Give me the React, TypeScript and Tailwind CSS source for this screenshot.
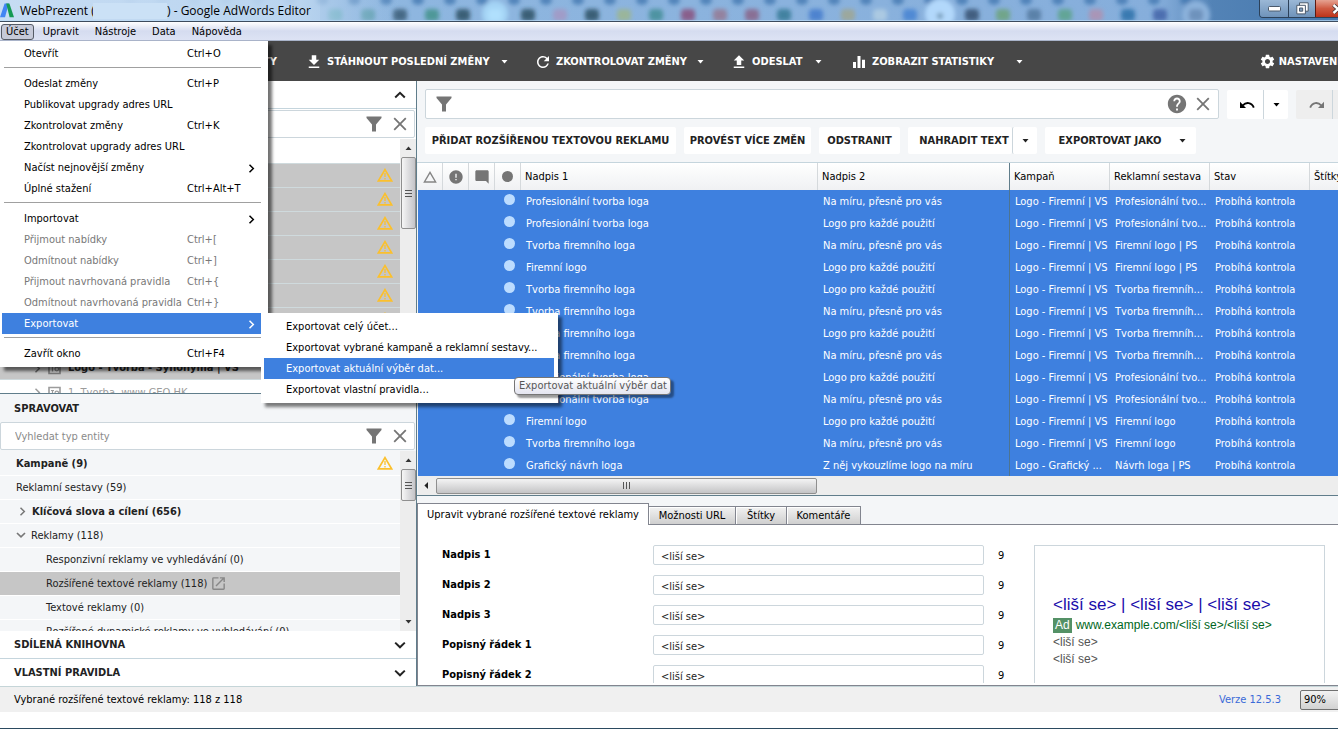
import React from "react";
import {
  MdFileDownload,
  MdRefresh,
  MdFileUpload,
  MdEqualizer,
  MdSettings,
  MdHelp,
  MdError,
  MdModeComment,
  MdLaunch,
} from "react-icons/md";

/* ---------- small icons ---------- */

function Caret({ className = "" }: { className?: string }) {
  return (
    <svg className={className} width="7" height="4" viewBox="0 0 7 4" aria-hidden="true">
      <path d="M0.5 0h6L3.5 3.6z" fill="currentColor" />
    </svg>
  );
}

function Funnel() {
  return (
    <svg width="16" height="16" viewBox="0 0 16 16" aria-hidden="true">
      <path d="M0.5 0.5h15v1.6L10 8.6V15.5H6V8.6L0.5 2.1z" fill="#757575" />
    </svg>
  );
}

function Cross() {
  return (
    <svg width="14" height="14" viewBox="0 0 14 14" aria-hidden="true">
      <path d="M1.2 1.2l11.6 11.6M12.8 1.2L1.2 12.8" stroke="#757575" strokeWidth="1.8" fill="none" />
    </svg>
  );
}

function Chevron({ dir, size = 12 }: { dir: "up" | "down"; size?: number }) {
  return (
    <svg width={size} height={size} viewBox="0 0 12 12" aria-hidden="true">
      <path
        d={dir === "up" ? "M1.2 8.5L6 3.8l4.8 4.7" : "M1.2 3.6L6 8.3l4.8-4.7"}
        stroke="currentColor"
        strokeWidth="2"
        fill="none"
      />
    </svg>
  );
}

function ChevronRight() {
  return (
    <svg width="7" height="9" viewBox="0 0 7 9" aria-hidden="true">
      <path d="M1.5 0.8l3.800 3.700-3.800 3.700" stroke="currentColor" strokeWidth="1.5" fill="none" />
    </svg>
  );
}

function Warning() {
  return (
    <svg width="16" height="14" viewBox="0 0 16 14" aria-hidden="true">
      <path d="M8 1.6L14.6 12.9H1.4z" fill="none" stroke="#fbc02d" strokeWidth="1.7" />
      <path d="M8 5v4M8 10v1.600" stroke="#fbc02d" strokeWidth="1.3" />
    </svg>
  );
}

function CampaignIcon() {
  return (
    <svg width="13" height="13" viewBox="0 0 13 13" aria-hidden="true">
      <path d="M1 1.5h11v10H1z" fill="none" stroke="currentColor" strokeWidth="1.6" />
      <path d="M3 4.5h3M4.5 4.5v5" stroke="currentColor" strokeWidth="1.2" />
      <circle cx="8.8" cy="7" r="1.8" fill="none" stroke="currentColor" strokeWidth="1.2" />
    </svg>
  );
}

function CurvedArrow({ flip = false }: { flip?: boolean }) {
  return (
    <svg width="15" height="8" viewBox="0 0 15 8" aria-hidden="true">
      <g transform={flip ? "translate(15 0) scale(-1 1)" : undefined}>
        <path d="M0 0.8v6.2h6z" fill="currentColor" />
        <path d="M2.8 4.3C6 1 11.5 1 13.8 6.6" stroke="currentColor" strokeWidth="1.9" fill="none" />
      </g>
    </svg>
  );
}

/* ---------- title bar ---------- */

const tabBlobs: [number, string][] = [
  [335, "#4aa3a8"], [368, "#4f97a0"], [400, "#34566f"], [432, "#3f9087"],
  [463, "#254a5c"], [495, "#b3e2ff"], [528, "#254a5c"], [560, "#a596c2"],
  [592, "#254a5c"], [624, "#9db58b"], [656, "#3d8c92"], [688, "#8a4a78"],
  [720, "#96758f"], [752, "#8a5f82"], [784, "#2f7591"], [816, "#3d78cc"],
  [848, "#a0a58d"], [880, "#b4cfe4"], [910, "#4280d2"], [972, "#2e4b69"],
  [1003, "#6aa375"], [1034, "#50759c"], [1065, "#59a286"], [1096, "#b18fae"],
  [1128, "#286da6"], [1160, "#405fa5"], [1196, "#6689b4"],
];

function TitleBar() {
  return (
    <header className="relative flex h-[22px] shrink-0 items-center overflow-hidden border-b border-[#3d4c5e] bg-linear-to-r from-[#b9d5f0] via-[#8ab2dd] to-[#4678ad]">
      <svg className="absolute inset-0 h-full w-full" aria-hidden="true">
        <defs>
          <filter id="soft" x="-50%" y="-50%" width="200%" height="200%">
            <feGaussianBlur stdDeviation="2" />
          </filter>
          <linearGradient id="glow">
            <stop offset="0" stopColor="#c6dcf3" />
            <stop offset="0.75" stopColor="#bcd6f0" stopOpacity="0.9" />
            <stop offset="1" stopColor="#a8c8e8" stopOpacity="0" />
          </linearGradient>
          <linearGradient id="sky">
            <stop offset="0" stopColor="#8fb7e0" />
            <stop offset="0.94" stopColor="#86aedb" />
            <stop offset="1" stopColor="#86aedb" stopOpacity="0" />
          </linearGradient>
        </defs>
        <rect x="320" width="892" height="22" fill="url(#sky)" />
        <g filter="url(#soft)">
          {Array.from({ length: 34 }, (_, i) => (
            <ellipse key={i} cx={130 + i * 32} cy="0" rx="6" ry="5" fill="#3f74ad" opacity="0.75" />
          ))}
          <circle cx="940" cy="14" r="15" fill="#b2d8fb" />
          <circle cx="940" cy="16" r="3" fill="#7195b4" />
          <circle cx="495" cy="14" r="13" fill="#a4d4f5" />
          <circle cx="1196" cy="15" r="14" fill="#8cb2dc" />
          {tabBlobs.map(([x, c]) => (
            <rect key={x} x={x - 7} y="9" width="14" height="12" rx="4" fill={c} opacity="0.8" />
          ))}
        </g>
        <rect width="400" height="22" fill="url(#glow)" />
        <rect y="20" width="100%" height="1" fill="#bcdcf5" opacity="0.7" />
      </svg>
      <svg className="relative shrink-0" width="14" height="15" viewBox="0 0 14 15" aria-hidden="true">
        <path d="M4.6 0.6h4.2L5 14.2H0z" fill="#4285f4" />
        <path d="M6.2 0.6h3.2L14 14.2H9.6z" fill="#159a53" />
      </svg>
      <h1 className="relative flex h-full items-center pl-1.5 font-['Open_Sans','Noto_Sans',sans-serif] text-xs text-black">
        <span className="w-[73px] whitespace-nowrap">WebPrezent (</span>
        <span className="h-4 w-[74px] bg-[#cbe1f6]" />
        <span className="whitespace-nowrap">) - Google AdWords Editor</span>
      </h1>
      <div className="relative -mr-[18px] ml-auto flex h-[18px] shrink-0 self-start overflow-hidden rounded-b border border-t-0 border-[#2c4159] text-white">
        <button type="button" aria-label="Minimalizovat" className="flex w-7 items-center justify-center bg-linear-to-b from-[#9bb8d6] to-[#6f93ba]">
          <svg width="13" height="6" viewBox="0 0 13 6"><rect x="0.5" y="0.5" width="12" height="4.5" rx="1" fill="#fff" stroke="#4b5a6c" /></svg>
        </button>
        <button type="button" aria-label="Obnovit" className="flex w-[27px] items-center justify-center border-l border-[#2c4159] bg-linear-to-b from-[#9bb8d6] to-[#6f93ba]">
          <svg width="13" height="13" viewBox="0 0 13 13">
            <path d="M3.5 0.8h8.7v8.400H3.500z" fill="#fff" stroke="#4b5a6c" />
            <path d="M0.8 3.300h8.600v8.600H0.800z" fill="#fff" stroke="#4b5a6c" />
            <path d="M3.500 6h3.200v3.200H3.500z" fill="#7f9dbd" stroke="#4b5a6c" />
          </svg>
        </button>
        <button type="button" aria-label="Zavřít" className="flex w-[40px] items-center justify-center border-l border-[#5d1a12] bg-linear-to-b from-[#e5a292] via-[#cf5a42] to-[#bc3219] pl-1">
          <svg width="12" height="10" viewBox="0 0 12 10"><path d="M1.500 1l9 8M10.500 1l-9 8" stroke="#4b3a3c" strokeWidth="4" /><path d="M1.500 1l9 8M10.500 1l-9 8" stroke="#fff" strokeWidth="2.400" /></svg>
        </button>
      </div>
    </header>
  );
}

/* ---------- menus ---------- */

type Entry = { label: string; keys?: string; sub?: boolean; off?: boolean; on?: boolean } | null;

const accountMenu: Entry[] = [
  { label: "Otevřít", keys: "Ctrl+O" },
  null,
  { label: "Odeslat změny", keys: "Ctrl+P" },
  { label: "Publikovat upgrady adres URL" },
  { label: "Zkontrolovat změny", keys: "Ctrl+K" },
  { label: "Zkontrolovat upgrady adres URL" },
  { label: "Načíst nejnovější změny", sub: true },
  { label: "Úplné stažení", keys: "Ctrl+Alt+T" },
  null,
  { label: "Importovat", sub: true },
  { label: "Přijmout nabídky", keys: "Ctrl+[", off: true },
  { label: "Odmítnout nabídky", keys: "Ctrl+]", off: true },
  { label: "Přijmout navrhovaná pravidla", keys: "Ctrl+{", off: true },
  { label: "Odmítnout navrhovaná pravidla", keys: "Ctrl+}", off: true },
  { label: "Exportovat", sub: true, on: true },
  null,
  { label: "Zavřít okno", keys: "Ctrl+F4" },
];

const exportMenu = [
  "Exportovat celý účet...",
  "Exportovat vybrané kampaně a reklamní sestavy...",
  "Exportovat aktuální výběr dat...",
  "Exportovat vlastní pravidla...",
];

function AccountMenu() {
  return (
    <div role="menu" className="absolute top-[19px] left-0 z-20 w-[268px] bg-white pt-0.5 pr-[7px] pb-[3px] pl-0.5 shadow-[4px_4px_3px_rgba(0,0,0,0.55)]">
      {accountMenu.map((e, i) =>
        e === null ? (
          <div key={i} role="separator" className="ml-0.5 h-[9px] pt-[3px]">
            <div className="h-px bg-[#a0a0a0]" />
          </div>
        ) : (
          <div key={i} className="relative">
            <button
              type="button"
              role="menuitem"
              disabled={e.off}
              className={`flex h-[21px] w-full items-center pt-px pr-1.5 pl-[22px] text-left whitespace-nowrap ${
                e.on ? "bg-[#3e80df] text-white" : e.off ? "text-[#787878]" : "text-black"
              }`}
            >
              <span className="w-[163px] shrink-0">{e.label}</span>
              <span>{e.keys}</span>
              {e.sub && <span className="ml-auto"><ChevronRight /></span>}
            </button>
            {e.on && <ExportMenu />}
          </div>
        ),
      )}
    </div>
  );
}

function ExportMenu() {
  return (
    <div role="menu" className="absolute top-0 left-[259px] z-30 w-[297px] bg-white py-[3px] pr-1 pl-[3px] shadow-[4px_4px_3px_rgba(0,0,0,0.5)]">
      {exportMenu.map((label, i) => (
        <button
          key={label}
          type="button"
          role="menuitem"
          className={`flex h-[21px] w-full items-center pt-px pl-[22px] text-left whitespace-nowrap ${
            i === 2 ? "bg-[#3e80df] text-white" : "text-black"
          }`}
        >
          {label}
        </button>
      ))}
      <div role="tooltip" className="absolute top-16 left-[253px] flex h-[18px] w-[157px] items-center rounded-sm border border-[#767676] bg-linear-to-b from-white to-[#e4e5f0] pl-1 whitespace-nowrap text-[#575757] shadow-[3px_3px_2px_rgba(0,0,0,0.4)]">
        Exportovat aktuální výběr dat
      </div>
    </div>
  );
}

function MenuBar() {
  return (
    <nav className="relative z-20 flex h-[19px] shrink-0 items-center border-b border-[#a9b3c9] bg-linear-to-b from-white via-[#d5dcf0] to-[#dde3f4] pt-px pl-px text-black">
      <button type="button" aria-expanded="true" className="mr-px h-4 rounded-[3px] border border-[#555b66] bg-[#c6cad9] px-1 leading-[14px]">
        Účet
      </button>
      {["Upravit", "Nástroje", "Data", "Nápověda"].map((m) => (
        <button key={m} type="button" className="h-4 px-2">
          {m}
        </button>
      ))}
      <AccountMenu />
    </nav>
  );
}

/* ---------- dark toolbar ---------- */

function ToolButton({ icon, label, className }: { icon: React.ReactNode; label: string; className: string }) {
  return (
    <button type="button" className={`flex h-full shrink-0 items-center gap-1 whitespace-nowrap ${className}`}>
      {icon}
      {label}
      <Caret className="ml-auto" />
    </button>
  );
}

function Toolbar() {
  return (
    <div className="flex h-10 shrink-0 items-center overflow-hidden bg-[#474747] pt-px font-bold text-white">
      <button type="button" className="w-[277px] shrink-0 pr-0 text-right">ÚČTY</button>
      <ToolButton className="ml-7 w-[203px]" icon={<MdFileDownload size={18} />} label="STÁHNOUT POSLEDNÍ ZMĚNY" />
      <ToolButton className="ml-[26px] w-[170px]" icon={<MdRefresh size={18} />} label="ZKONTROLOVAT ZMĚNY" />
      <ToolButton className="ml-[26px] w-[92px]" icon={<MdFileUpload size={18} />} label="ODESLAT" />
      <ToolButton className="ml-7 w-[173px]" icon={<MdEqualizer size={18} />} label="ZOBRAZIT STATISTIKY" />
      <button type="button" className="-mr-[3px] ml-auto flex shrink-0 items-center gap-[3px]">
        <MdSettings size={17} />
        NASTAVENÍ
      </button>
    </div>
  );
}

/* ---------- shared pieces ---------- */

function VScroll({ thumb }: { thumb: string }) {
  return (
    <div className="flex w-4 shrink-0 flex-col items-center bg-[#ededed] text-[#333]">
      <svg className="mt-[7px] mb-[7px] shrink-0" width="7" height="4" viewBox="0 0 7 4"><path d="M0.500 4h6L3.500 0.400z" fill="currentColor" /></svg>
      <div className={`flex w-[15px] shrink-0 flex-col items-center justify-center gap-px rounded-xs border border-[#8f8f8f] bg-linear-to-r from-[#f6f6f6] to-[#c4c4c8] ${thumb}`}>
        <span className="h-px w-[7px] bg-[#555]" />
        <span className="mt-px h-px w-[7px] bg-[#555]" />
        <span className="mt-px h-px w-[7px] bg-[#555]" />
      </div>
      <Caret className="mt-auto mb-[7px] shrink-0" />
    </div>
  );
}

function SideFilter({ label, placeholder }: { label: string; placeholder?: string }) {
  return (
    <div className="mr-px flex h-7 shrink-0 items-center gap-[11px] rounded-xs border border-[#ccd6dc] bg-white pr-[7px] pl-[14px]">
      <input aria-label={label} placeholder={placeholder} className="min-w-0 flex-1 pt-0.5 text-[#222] outline-none placeholder:text-[#8a8a8a]" />
      <button type="button" aria-label="Filtr"><Funnel /></button>
      <button type="button" aria-label="Vymazat"><Cross /></button>
    </div>
  );
}

/* ---------- left panel ---------- */

const entities = [
  { label: "Kampaně (9)", bold: true, indent: "pl-4", warn: true },
  { label: "Reklamní sestavy (59)", indent: "pl-4" },
  { label: "Klíčová slova a cílení (656)", bold: true, indent: "pl-[19px]", arrow: "right" },
  { label: "Reklamy (118)", indent: "pl-4", arrow: "down" },
  { label: "Responzivní reklamy ve vyhledávání (0)", indent: "pl-[46px]" },
  { label: "Rozšířené textové reklamy (118)", indent: "pl-[46px]", on: true },
  { label: "Textové reklamy (0)", indent: "pl-[46px]" },
  { label: "Rozšířené dynamické reklamy ve vyhledávání (0)", indent: "pl-[46px]" },
];

function LeftPanel() {
  return (
    <aside className="flex w-[416px] shrink-0 flex-col bg-[#f4f6f8] text-[#222]">
      <button type="button" aria-label="Sbalit strom účtu" className="flex h-7 shrink-0 items-center justify-end border-b border-[#c5d5dd] bg-white pr-[10px]">
        <Chevron dir="up" />
      </button>
      <div className="shrink-0 bg-white py-px">
        <SideFilter label="Hledat v účtu" />
      </div>
      <div className="flex min-h-0 flex-1 overflow-hidden bg-white">
        <div className="min-w-0 flex-1 pt-px">
          <div className="h-6 border-b border-[#cfdadd]" />
          {Array.from({ length: 8 }, (_, i) => (
            <div key={i} className="flex h-6 items-center justify-end border-b border-[#cfdadd] bg-[#c6c6c6] pr-[7px] pb-0.5">
              <Warning />
            </div>
          ))}
          <div className="flex h-6 items-center border-b border-[#cfdadd] bg-[#c6c6c6] pt-px pl-[34px] font-bold whitespace-nowrap">
            <span className="text-[#666]"><ChevronRight /></span>
            <span className="mr-[7px] ml-[7px] text-[#777]"><CampaignIcon /></span>
            Logo - Tvorba - Synonyma | VS
          </div>
          <div className="flex h-6 items-center pt-px pl-[34px] whitespace-nowrap text-[#9c9c9c]">
            <ChevronRight />
            <span className="mr-[7px] ml-[7px]"><CampaignIcon /></span>
            1. Tvorba, www GEO HK
          </div>
        </div>
        <VScroll thumb="h-[72px]" />
      </div>
      <h2 className="flex h-[29px] shrink-0 items-center border-t border-[#607d8b] pt-px pl-[14px] font-bold">SPRAVOVAT</h2>
      <SideFilter label="Vyhledat typ entity" placeholder="Vyhledat typ entity" />
      <div className="mt-px flex h-[180px] shrink-0 overflow-hidden">
        <ul className="min-w-0 flex-1 pt-px">
          {entities.map((e) => (
            <li
              key={e.label}
              className={`flex h-6 items-center border-b border-white pt-px pr-[7px] whitespace-nowrap ${e.indent} ${
                e.on ? "bg-[#c6c6c6]" : ""
              } ${e.bold ? "font-bold" : ""}`}
            >
              {e.arrow === "right" && <span className="mr-1.5 pb-0.5 text-[#777]"><ChevronRight /></span>}
              {e.arrow === "down" && <span className="mr-[5px] pb-0.5 text-[#777]"><Chevron dir="down" size={10} /></span>}
              {e.label}
              {e.on && <MdLaunch size={17} className="mb-0.5 ml-[3px] text-[#888]" />}
              {e.warn && <span className="ml-auto pb-0.5"><Warning /></span>}
            </li>
          ))}
        </ul>
        <VScroll thumb="h-8" />
      </div>
      <button type="button" className="flex h-7 shrink-0 items-center justify-between border-b border-[#c5d5dd] bg-white pt-px pr-[10px] pl-[14px] font-bold">
        SDÍLENÁ KNIHOVNA
        <Chevron dir="down" />
      </button>
      <button type="button" className="flex h-[27px] shrink-0 items-center justify-between bg-white pt-px pr-[10px] pl-[14px] font-bold">
        VLASTNÍ PRAVIDLA
        <Chevron dir="down" />
      </button>
    </aside>
  );
}

/* ---------- table ---------- */

const P = "Profesionální tvorba loga";
const T = "Tvorba firemního loga";
const M = "Na míru, přesně pro vás";
const L = "Logo pro každé použití";
const F = "Logo - Firemní | VS";

const ads: string[][] = [
  [P, M, F, "Profesionální tvo..."],
  [P, L, F, "Profesionální tvo..."],
  [T, M, F, "Firemní logo | PS"],
  ["Firemní logo", L, F, "Firemní logo | PS"],
  [T, L, F, "Tvorba firemníh..."],
  [T, M, F, "Tvorba firemníh..."],
  [T, L, F, "Tvorba firemníh..."],
  [T, M, F, "Tvorba firemníh..."],
  [P, L, F, "Profesionální tvo..."],
  [P, M, F, "Profesionální tvo..."],
  ["Firemní logo", L, F, "Firemní logo"],
  [T, M, F, "Firemní logo"],
  ["Grafický návrh loga", "Z něj vykouzlíme logo na míru", "Logo - Grafický ...", "Návrh loga | PS"],
];

function AdsTable() {
  const th = "border-r border-[#d5d9dc] pt-px pl-1 font-normal";
  const td = "overflow-hidden pt-0.5 pl-[5px]";
  return (
    <div className="shrink-0 overflow-hidden border-t border-[#c5d5dd] pl-px">
      <table className="w-full table-fixed border-separate border-spacing-0 text-left whitespace-nowrap">
        <colgroup>
          <col className="w-[25px]" />
          <col className="w-[26px]" />
          <col className="w-[26px]" />
          <col className="w-[26px]" />
          <col className="w-[297px]" />
          <col className="w-[192px]" />
          <col className="w-[100px]" />
          <col className="w-[100px]" />
          <col className="w-[100px]" />
          <col />
        </colgroup>
        <thead className="text-black">
          <tr className="h-[27px] bg-linear-to-b from-white via-[#f7f8f9] to-[#f0f1f3]">
            <th className="border-r border-[#d5d9dc] pl-[5px]" aria-label="Upozornění">
              <svg width="14" height="12" viewBox="0 0 14 12"><path d="M7 1.400L12.600 11H1.400z" fill="none" stroke="#858585" strokeWidth="1.400" /></svg>
            </th>
            <th className="border-r border-[#d5d9dc] pl-[5px] text-[#757575]" aria-label="Chyby"><MdError size={16} /></th>
            <th className="border-r border-[#d5d9dc] pl-[5px] text-[#757575]" aria-label="Komentáře"><MdModeComment size={16} /></th>
            <th className="border-r border-[#d5d9dc] pl-[7px]" aria-label="Stav"><span className="block size-[11px] rounded-full bg-[#757575]" /></th>
            <th className={th}>Nadpis 1</th>
            <th className="border-r border-[#607d8b] pt-px pl-1 font-normal">Nadpis 2</th>
            <th className={th}>Kampaň</th>
            <th className={th}>Reklamní sestava</th>
            <th className={th}>Stav</th>
            <th className="overflow-hidden pt-px pl-1 font-normal">Štítky</th>
          </tr>
        </thead>
        <tbody className="bg-[#3e80df] text-white">
          {ads.map((r, i) => (
            <tr key={i} className="h-[22px]">
              <td /><td /><td />
              <td className="pt-1 pl-[9px] align-top"><span className="block size-[11px] rounded-full bg-[#bcdcff]" /></td>
              <td className={td}>{r[0]}</td>
              <td className="border-r border-[#4d7490] pt-0.5 pl-[5px]">{r[1]}</td>
              <td className={td}>{r[2]}</td>
              <td className={td}>{r[3]}</td>
              <td className={td}>Probíhá kontrola</td>
              <td />
            </tr>
          ))}
        </tbody>
      </table>
      <div className="flex h-[19px] items-center bg-[#ededed] pl-1.5 text-[#222]">
        <svg className="mr-2 shrink-0" width="4" height="7" viewBox="0 0 4 7"><path d="M4 0v7L0.400 3.500z" fill="currentColor" /></svg>
        <div className="flex h-4 w-[381px] shrink-0 items-center justify-center gap-0.5 rounded-xs border border-[#8f8f8f] bg-linear-to-b from-[#f4f4f4] to-[#c4c4c6]">
          <span className="h-[7px] w-px bg-[#555]" />
          <span className="h-[7px] w-px bg-[#555]" />
          <span className="h-[7px] w-px bg-[#555]" />
        </div>
      </div>
    </div>
  );
}

/* ---------- right panel ---------- */

function ActionBar() {
  const btn = "flex h-[27px] shrink-0 items-center justify-center rounded-xs bg-white pt-px font-bold whitespace-nowrap text-[#222]";
  return (
    <div className="flex gap-2 overflow-hidden pt-2 pb-2 pl-2">
      <button type="button" className={`${btn} w-[251px]`}>PŘIDAT ROZŠÍŘENOU TEXTOVOU REKLAMU</button>
      <button type="button" className={`${btn} w-[127px]`}>PROVÉST VÍCE ZMĚN</button>
      <button type="button" className={`${btn} w-[81px]`}>ODSTRANIT</button>
      <div className="flex shrink-0">
        <button type="button" className={`${btn} w-[104px] pl-2`}>NAHRADIT TEXT</button>
        <button type="button" aria-label="Další možnosti nahrazení" className={`${btn} w-[25px] border-l border-[#ccd6dc]`}><Caret /></button>
      </div>
      <button type="button" className={`${btn} w-[151px] gap-[18px] pl-1`}>EXPORTOVAT JAKO <Caret /></button>
    </div>
  );
}

function FilterRow() {
  return (
    <div className="flex h-[38px] items-end gap-2 overflow-hidden pl-2">
      <div className="flex h-[30px] min-w-0 flex-1 items-center rounded-xs border border-[#ccd6dc] bg-white pr-2 pl-[10px]">
        <button type="button" aria-label="Filtr"><Funnel /></button>
        <input aria-label="Filtrovat reklamy" className="ml-3 min-w-0 flex-1 outline-none" />
        <button type="button" aria-label="Nápověda k filtru" className="mr-2 text-[#757575]"><MdHelp size={22} /></button>
        <button type="button" aria-label="Vymazat filtr"><Cross /></button>
      </div>
      <div className="flex h-[29px] shrink-0 text-black">
        <button type="button" aria-label="Zpět" className="flex w-9 items-center justify-center rounded-l-xs bg-white pl-1"><CurvedArrow /></button>
        <button type="button" aria-label="Historie zpět" className="flex w-[25px] items-center justify-center rounded-r-xs border-l border-[#ccd6dc] bg-white"><Caret /></button>
      </div>
      <div className="-mr-[19px] flex h-[29px] shrink-0 text-[#757575]">
        <button type="button" aria-label="Znovu" className="flex w-9 items-center justify-center rounded-l-xs bg-[#eeeeee] pl-1"><CurvedArrow flip /></button>
        <button type="button" aria-label="Historie znovu" className="w-[25px] border-l border-[#ccd6dc] bg-[#eeeeee]" />
      </div>
    </div>
  );
}

const fields = ["Nadpis 1", "Nadpis 2", "Nadpis 3", "Popisný řádek 1", "Popisný řádek 2"];

function Details() {
  const tab = "h-[19px] border border-l-0 border-[#82858f] bg-linear-to-b from-[#f2f2f2] to-[#cfcfcf] pt-px text-black shadow-[inset_1px_1px_0_#fff]";
  return (
    <section className="flex min-h-0 flex-1 flex-col border-t border-[#607d8b]">
      <div className="mt-[7px] flex h-[22px] shrink-0 items-end" role="tablist">
        <button type="button" role="tab" aria-selected="true" className="h-[22px] w-[232px] border border-b-0 border-[#82858f] bg-white text-black whitespace-nowrap">
          Upravit vybrané rozšířené textové reklamy
        </button>
        <button type="button" role="tab" className={`${tab} w-[87px]`}>Možnosti URL</button>
        <button type="button" role="tab" className={`${tab} w-[51px]`}>Štítky</button>
        <button type="button" role="tab" className={`${tab} w-[74px]`}>Komentáře</button>
        <div className="h-px flex-1 bg-[#82858f]" />
      </div>
      <div className="flex min-h-0 flex-1 overflow-hidden border-b border-l border-[#82858f] bg-white pt-5 pl-6 pb-0.5">
        <div className="h-full min-w-0 flex-1 overflow-hidden">
          {fields.map((f, i) => (
            <div key={f} className="mb-[10px] flex h-5 items-center">
              <label htmlFor={`field-${i}`} className="w-[211px] shrink-0 font-bold text-black">{f}</label>
              <input id={`field-${i}`} defaultValue="<liší se>" className="h-5 min-w-0 flex-1 rounded-xs border border-[#ccd6dc] bg-white px-[7px] pt-0.5 text-[#222] outline-none" />
              <span className="w-[50px] pt-0.5 pl-[14px] text-black">9</span>
            </div>
          ))}
        </div>
        <div className="mr-[13px] h-full w-[291px] shrink-0 overflow-hidden border border-b-0 border-[#ccd6dc] pt-[49px] pl-[18px] font-['Liberation_Sans',Arial,sans-serif] text-xs leading-[17px] text-[#545454]">
          <p className="mb-0.5 text-[17px] leading-5 text-[#1a0dab]">&lt;liší se&gt; | &lt;liší se&gt; | &lt;liší se&gt;</p>
          <p className="text-[#006621]"><span className="mr-1 inline-block h-[15px] bg-[#549166] px-0.5 leading-[15px] text-white">Ad</span>www.example.com/&lt;liší se&gt;/&lt;liší se&gt;</p>
          <p>&lt;liší se&gt;</p>
          <p>&lt;liší se&gt;</p>
        </div>
      </div>
    </section>
  );
}

export default function App() {
  return (
    <div className="flex h-screen flex-col overflow-hidden bg-white font-['DejaVu_Sans_Condensed','Noto_Sans',sans-serif] text-[11px] leading-[14px]">
      <TitleBar />
      <MenuBar />
      <Toolbar />
      <main className="flex min-h-0 flex-1 overflow-hidden">
        <LeftPanel />
        <div className="flex min-w-0 flex-1 flex-col border-l border-[#607d8b] bg-[#f4f6f8]">
          <FilterRow />
          <ActionBar />
          <AdsTable />
          <Details />
        </div>
      </main>
      <footer className="flex h-[26px] shrink-0 items-center overflow-hidden border-t border-[#c5d5d8] bg-[#f0f0f0] pt-px pl-[14px] text-black">
        <span>Vybrané rozšířené textové reklamy: 118 z 118</span>
        <a href="#verze" className="ml-auto text-[#3a6ad8]">Verze 12.5.3</a>
        <select aria-label="Přiblížení" defaultValue="90" className="-mr-[22px] ml-[19px] h-5 w-[60px] shrink-0 appearance-none rounded-xs border border-[#707070] bg-linear-to-b from-[#f2f2f2] to-[#d2d2d2] pl-[3px] text-black">
          <option value="90">90%</option>
        </select>
      </footer>
      <div className="h-4 shrink-0 bg-white" />
      <div className="h-px shrink-0 bg-[#2b4a60]" />
    </div>
  );
}
